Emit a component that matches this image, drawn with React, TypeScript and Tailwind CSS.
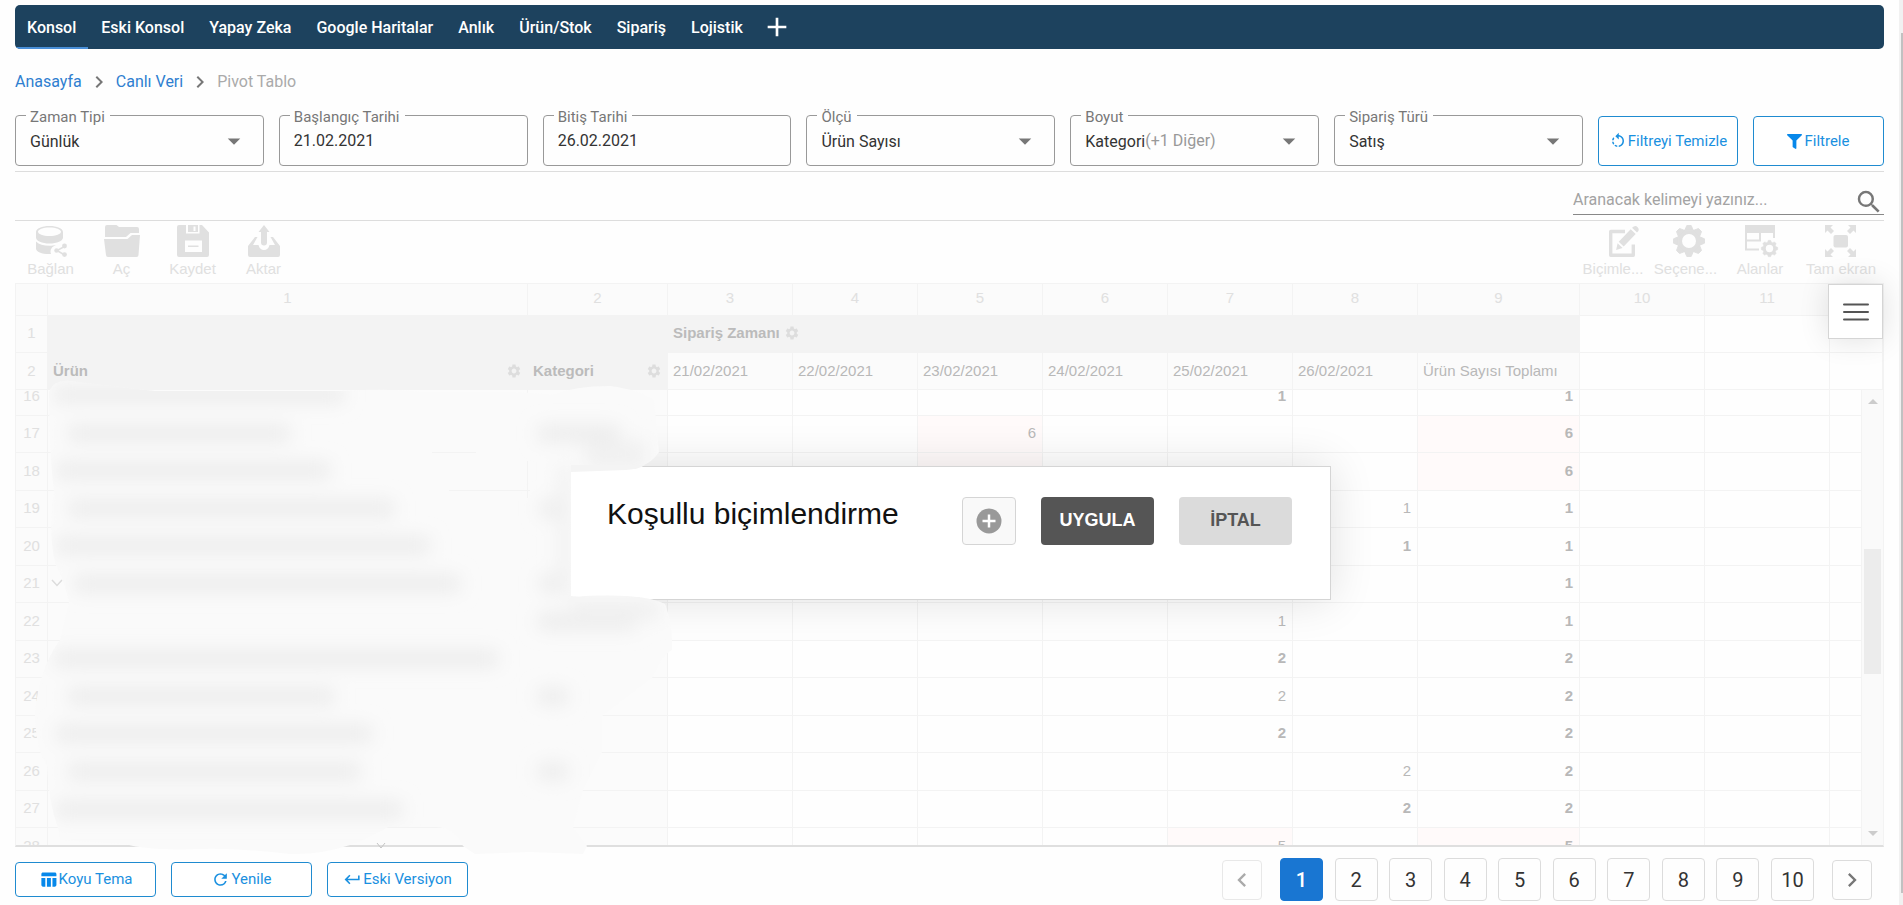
import React from "react";
import { FaFilter } from "react-icons/fa";
import {
  MdAdd,
  MdArrowDropDown,
  MdChevronLeft,
  MdChevronRight,
  MdKeyboardReturn,
  MdRefresh,
  MdRotateLeft,
  MdSearch,
  MdSettings,
  MdTableChart,
} from "react-icons/md";

const navItems = ["Konsol", "Eski Konsol", "Yapay Zeka", "Google Haritalar", "Anlık", "Ürün/Stok", "Sipariş", "Lojistik"];

const columnWidths = [
  "w-[32px]", "w-[480px]", "w-[140px]", "w-[125px]", "w-[125px]", "w-[125px]",
  "w-[125px]", "w-[125px]", "w-[125px]", "w-[162px]", "w-[125px]", "w-[125px]", "",
];

const dates = ["21/02/2021", "22/02/2021", "23/02/2021", "24/02/2021", "25/02/2021", "26/02/2021"];

type Row = { no: number; short?: boolean; col?: number; value?: string; bold?: boolean; total: string; hot?: boolean };

const rows: Row[] = [
  { no: 16, short: true, col: 7, value: "1", bold: true, total: "1" },
  { no: 17, short: true, col: 5, value: "6", total: "6", hot: true },
  { no: 18, col: 5, value: "6", bold: true, total: "6", hot: true },
  { no: 19, short: true, col: 8, value: "1", total: "1" },
  { no: 20, col: 8, value: "1", bold: true, total: "1" },
  { no: 21, short: true, total: "1" },
  { no: 22, col: 7, value: "1", total: "1" },
  { no: 23, short: true, col: 7, value: "2", bold: true, total: "2" },
  { no: 24, col: 7, value: "2", total: "2" },
  { no: 25, short: true, col: 7, value: "2", bold: true, total: "2" },
  { no: 26, col: 8, value: "2", total: "2" },
  { no: 27, short: true, col: 8, value: "2", bold: true, total: "2" },
  { no: 28, col: 7, value: "5", total: "5", hot: true },
];

/* x, y, width of each obscured label */
const obscured = [
  [54, 386, 290], [68, 425, 222], [56, 462, 274], [68, 500, 326], [56, 537, 374], [74, 575, 386],
  [54, 650, 444], [68, 688, 266], [56, 725, 316], [68, 763, 292], [56, 801, 346],
  [538, 425, 82], [540, 500, 28], [540, 575, 28], [538, 613, 98], [538, 688, 30], [538, 763, 30],
];

function Field({ id, label, children }: { id: string; label: string; children: React.ReactNode }) {
  return (
    <div className="relative h-[51px] flex-1 rounded border border-[#999]">
      <label htmlFor={id} className="absolute -top-[9px] left-[10px] bg-[#fefefe] pr-[5px] pl-1 text-[15px] leading-5 text-[#777]">
        {label}
      </label>
      {children}
    </div>
  );
}

function SelectField({ id, label, value, extra }: { id: string; label: string; value: string; extra?: string }) {
  return (
    <Field id={id} label={label}>
      <select id={id} className="h-full w-full appearance-none bg-transparent pt-[2px] pr-10 pl-[14px] text-base text-[#333] outline-none">
        <option>{value}</option>
      </select>
      {extra && (
        <span className="pointer-events-none absolute top-[13px] left-[74px] text-base leading-6 text-[#999]">{extra}</span>
      )}
      <MdArrowDropDown className="pointer-events-none absolute top-[10px] right-[14px] size-[30px] text-[#777]" />
    </Field>
  );
}

function DateField({ id, label, value }: { id: string; label: string; value: string }) {
  return (
    <Field id={id} label={label}>
      <input id={id} type="text" defaultValue={value} className="h-full w-full bg-transparent px-[14px] text-base text-[#333] outline-none" />
    </Field>
  );
}

function OutlineButton({ className, icon, children }: { className: string; icon: React.ReactNode; children: React.ReactNode }) {
  return (
    <button type="button" className={`flex items-center justify-center gap-px rounded border border-[#1f8bd0] bg-white text-[15px] text-[#1a90e0] ${className}`}>
      {icon}
      {children}
    </button>
  );
}

const teeth = [0, 45, 90, 135, 180, 225, 270, 315];

function Gear({ cx, cy, r }: { cx: number; cy: number; r: number }) {
  return (
    <g>
      <circle cx={cx} cy={cy} r={r * 0.61} fill="none" stroke="currentColor" strokeWidth={r * 0.32} />
      {teeth.map((a) => (
        <path
          key={a}
          d={`M${cx - r * 0.28} ${cy - r * 0.68}L${cx - r * 0.14} ${cy - r}h${r * 0.28}L${cx + r * 0.28} ${cy - r * 0.68}z`}
          fill="currentColor"
          stroke="currentColor"
          strokeLinejoin="round"
          strokeWidth={r * 0.06}
          transform={`rotate(${a} ${cx} ${cy})`}
        />
      ))}
    </g>
  );
}

const icons = {
  connect: (
    <svg viewBox="-3 0 36 32" className="h-8 w-9" fill="currentColor">
      <path fillRule="evenodd" d="M0 7C0 3.500 6 1 13.500 1S27 3.500 27 7v5.500c0 3.500-6 6-13.500 6S0 16 0 12.500zM2 6.700c0 2.300 5 4.300 11.500 4.300S25 9 25 6.700 20 2.400 13.500 2.400 2 4.400 2 6.700z" />
      <path d="M0 16.500c3 3 7.500 4.300 13.500 4.300 2.500 0 4.500-.3 6.500-.8-4 1.500-6.500 4.500-5 9C7 29.500 0 27 0 23.500z" />
      <path d="M28.500 21.500L21 25.500l7.500 4.500" fill="none" stroke="currentColor" strokeWidth="1.500" />
      <circle cx="28.500" cy="21" r="2.400" />
      <circle cx="20.500" cy="25.500" r="2.200" />
      <circle cx="28.500" cy="29.600" r="2.400" />
    </svg>
  ),
  open: (
    <svg viewBox="0 0 36 32" className="h-8 w-9" fill="currentColor">
      <path d="M1 12V2a2 2 0 0 1 2-2h9.500l2.500 2h18a2 2 0 0 1 2 2v4H26.500l-4.500 4z" />
      <path d="M0 14h23.500l4.500-4h8l-1.500 20a2 2 0 0 1-2 2H4a2 2 0 0 1-2-2z" />
    </svg>
  ),
  save: (
    <svg viewBox="0 0 32 32" className="size-8" fill="currentColor">
      <path fillRule="evenodd" d="M2 0h7v8.500h13.500V0H25l7 7.500V30a2 2 0 0 1-2 2H2a2 2 0 0 1-2-2V2a2 2 0 0 1 2-2zM8 15.500v11.500h17V15.500z" />
      <path fillRule="evenodd" d="M11 0h10v7H11zM16.500 1.500V6h2V1.500z" />
      <path d="M11 20.500h10.500V22H11z" />
    </svg>
  ),
  share: (
    <svg viewBox="0 0 32 32" className="size-8" fill="currentColor">
      <path d="M16 0l5.500 7H19v10.500a3 3 0 0 1-6 0V7h-2.500z" />
      <path d="M0 21L7 12h2.500L5 20h5.500c.8 3.200 2.800 5 5.500 5s4.700-1.800 5.500-5H27l-4.500-8H25l7 9v9a2 2 0 0 1-2 2H2a2 2 0 0 1-2-2z" />
    </svg>
  ),
  format: (
    <svg viewBox="-22 0 52 32" className="h-8 w-[52px]" fill="currentColor">
      <path d="M16 6.500H1.700V30.300h22.600V19.500" fill="none" stroke="currentColor" strokeLinejoin="round" strokeWidth="3.400" />
      <path d="M24.800 1.400a3.500 3.500 0 0 1 4.600 4.600l-1.400 1.500-5-4.700zM21.700 4.200l5 4.800-12 12.500-5-4.800zM8.600 18.300l5 4.600-6.500 2z" />
    </svg>
  ),
  options: (
    <svg viewBox="-7 0 39 32" className="h-8 w-[39px]">
      <Gear cx={16} cy={16} r={15.500} />
    </svg>
  ),
  fields: (
    <svg viewBox="-1 0 32 32" className="size-8 overflow-visible">
      <path d="M0 0h30v8H0z" fill="currentColor" />
      <path d="M1 8v16.500h13M1 15.500h14V8M29 8v5" fill="none" stroke="currentColor" strokeWidth="2" />
      <Gear cx={24.500} cy={23.500} r={8.200} />
    </svg>
  ),
  fullscreen: (
    <svg viewBox="0 0 32 32" className="size-8" fill="currentColor">
      <rect x="8.500" y="10" width="14.500" height="12.500" rx="2" />
      <path d="M0 0h8L5.500 2.500 9 6 6 9 2.500 5.500 0 8zM31 0v8l-2.500-2.500L25 9l-3-3 3.500-3.500L23 0zM0 32v-8l2.500 2.500L6 23l3 3-3.500 3.500L8 32zM31 32h-8l2.500-2.500L22 26l3-3 3.500 3.500L31 24z" />
    </svg>
  ),
};

function Tool({ className, icon, label }: { className: string; icon: React.ReactNode; label: string }) {
  return (
    <button type="button" className={`flex flex-col items-center pt-1 font-['Liberation_Sans',sans-serif] text-[15px] leading-6 text-[#e0e0e0] ${className}`}>
      {icon}
      {label}
    </button>
  );
}

function Columns() {
  return (
    <colgroup>
      {columnWidths.map((w, i) => (
        <col key={i} className={w} />
      ))}
    </colgroup>
  );
}

const edge = "border-r border-b border-[#f3f3f3]";
const line = "border-r border-b border-[#f3f3f3] pb-[2px]";

function GridHead() {
  return (
    <table className="w-full table-fixed border-separate border-spacing-0">
      <Columns />
      <tbody>
        <tr className="h-8 bg-[#fbfbfb] text-[#e0e0e0]">
          <td className={edge} />
          {["1", "2", "3", "4", "5", "6", "7", "8", "9", "10", "11", ""].map((n, i) => (
            <td key={i} className={`pb-1 text-center ${edge}`}>{n}</td>
          ))}
        </tr>
        <tr className="h-[37px]">
          <td className={`bg-[#fbfbfb] text-center text-[#e0e0e0] ${line}`}>1</td>
          <td colSpan={2} className={`bg-[#f3f3f3] ${line}`} />
          <th colSpan={7} className={`bg-[#f3f3f3] px-[5px] text-left text-[#bbb] ${line}`}>
            <span className="flex items-center gap-1">
              Sipariş Zamanı <MdSettings className="size-4 text-[#ddd]" />
            </span>
          </th>
          <td className={line} />
          <td className={line} />
          <td className={line} />
        </tr>
        <tr className="h-[37px] text-[#b8b8b8]">
          <td className={`bg-[#fbfbfb] text-center text-[#e0e0e0] ${edge}`}>2</td>
          <th className={`bg-[#f3f3f3] px-[5px] text-left text-[#bbb] ${edge}`}>
            <span className="flex items-center justify-between">
              Ürün <MdSettings className="size-4 text-[#ddd]" />
            </span>
          </th>
          <th className={`bg-[#f3f3f3] px-[5px] text-left text-[#bbb] ${edge}`}>
            <span className="flex items-center justify-between">
              Kategori <MdSettings className="size-4 text-[#ddd]" />
            </span>
          </th>
          {dates.map((d) => (
            <td key={d} className={`bg-[#fbfbfb] pl-[5px] ${edge}`}>{d}</td>
          ))}
          <td className={`bg-[#fbfbfb] pl-[5px] ${edge}`}>Ürün Sayısı Toplamı</td>
          <td className={edge} />
          <td className={edge} />
          <td className={edge} />
        </tr>
      </tbody>
    </table>
  );
}

function GridBody() {
  return (
    <table className="-mt-[11px] w-full table-fixed border-separate border-spacing-0">
      <Columns />
      <tbody className="text-right text-[#b8b8b8]">
        {rows.map((r) => (
          <tr key={r.no} className={r.short ? "h-[37px]" : "h-[38px]"}>
            <td className={`bg-[#fbfbfb] text-center text-[#e0e0e0] ${line}`}>{r.no}</td>
            <td className={`bg-[#fbfbfb] ${line}`}>
              {r.no === 21 && (
                <svg viewBox="0 0 12 8" className="ml-[3px] h-2 w-3">
                  <path d="M1 1l5 5.500L11 1" fill="none" stroke="#dcdcdc" strokeWidth="1.500" />
                </svg>
              )}
            </td>
            <td className={`bg-[#fbfbfb] ${line}`} />
            {[3, 4, 5, 6, 7, 8].map((c) => (
              <td
                key={c}
                className={`pr-[6px] ${line} ${r.bold ? "font-bold" : ""} ${r.hot && r.col === c ? "bg-[#fffafa]" : ""}`}
              >
                {r.col === c ? r.value : ""}
              </td>
            ))}
            <td className={`pr-[6px] font-bold ${line} ${r.hot ? "bg-[#fffafa]" : ""}`}>{r.total}</td>
            <td className={line} />
            <td className={line} />
            <td className={line} />
          </tr>
        ))}
      </tbody>
    </table>
  );
}

function Smudge() {
  return (
    <svg aria-hidden="true" viewBox="15 370 685 490" className="pointer-events-none absolute -left-px top-[86px] h-[490px] w-[685px]">
      <defs>
        <filter id="soft" x="-20%" y="-100%" width="140%" height="300%">
          <feGaussianBlur stdDeviation="9" />
        </filter>
        <clipPath id="patch">
          <path d="M49 392Q54 379 70 381Q110 386 155 391L340 391Q390 388 420 392L500 392Q530 392 553 395Q575 386 610 386Q640 390 654 400L659 452Q650 466 630 469L571 471V597Q640 592 665 604Q673 625 672 650Q662 655 653 677L602 716V752L583 790L573 827L587 846L583 854L530 852L475 854L463 846Q455 828 436 827L388 827Q370 838 350 845Q320 855 290 854Q240 848 200 849Q150 851 125 844L60 840L58 828Q48 800 47 765Q36 752 35 715Q38 670 60 640L69 602Q64 580 55 563Q48 530 54 492Q49 450 49 392z" />
        </clipPath>
      </defs>
      <g clipPath="url(#patch)">
        <path d="M15 370h685v490H15z" fill="#fafafa" />
        <path d="M432 452.500h44M449 490.500h81M527.500 461v37" stroke="#f3f3f3" fill="none" />
        <g filter="url(#soft)" fill="#ececec">
          {obscured.map(([x, y, w]) => (
            <rect key={`${x}-${y}`} x={x} y={y} width={w} height={17} />
          ))}
          <path d="M558 465h13v130h-13zM585 440h62v30h-62zM571 598h90v22h-90z" fill="#f1f1f1" />
        </g>
      </g>
      <path d="M571 472Q600 470 642 469L646 467H642V465H571zM571 471h14v124q-7 3-14 0z" fill="#fff" />
      <path d="M571 465H645Q640 469 626 470L571 472z" fill="#f4f4f4" />
      <path d="M571 596Q600 600 640 597V602H571z" fill="#f5f5f5" />
      <path d="M377 843l4 5 4-5" fill="none" stroke="#c4c4c4" />
    </svg>
  );
}

function FormatDialog() {
  return (
    <div className="pointer-events-none absolute inset-x-0 -top-[63px] bottom-0 flex items-center justify-center pl-[2px]">
      <div
        role="dialog"
        aria-label="Koşullu biçimlendirme"
        className="pointer-events-auto flex h-[134px] w-[761px] items-start justify-between border border-[#d5d5d5] bg-white pr-[38px] pl-9 pt-[30px] shadow-[0_0_45px_rgba(0,0,0,0.12)]"
      >
        <h2 className="text-[30px] leading-[34px] text-[#111]">Koşullu biçimlendirme</h2>
        <div className="flex gap-[25px]">
          <button type="button" aria-label="Ekle" className="flex h-12 w-[54px] items-center justify-center rounded border border-[#d5d5d5] bg-[#f9f9f9]">
            <svg viewBox="0 0 26 26" className="size-[26px]">
              <circle cx="13" cy="13" r="12.500" fill="#999" />
              <path d="M13 6.500v13M6.500 13h13" stroke="#fff" strokeWidth="2.500" />
            </svg>
          </button>
          <button type="button" className="h-12 w-[113px] rounded bg-[#555] pb-[2px] text-lg font-bold text-white">UYGULA</button>
          <button type="button" className="h-12 w-[113px] rounded bg-[#dbdbdb] pb-[2px] text-lg font-bold text-[#555]">İPTAL</button>
        </div>
      </div>
    </div>
  );
}

export default function App() {
  return (
    <div className="relative min-h-screen bg-[#fefefe] pt-[5px] pr-[19px] pl-[15px] font-[Roboto,sans-serif]">
      <nav className="flex h-11 gap-px overflow-hidden rounded-[5px] bg-[#1d425e]">
        {navItems.map((n, i) => (
          <a
            key={n}
            href="#"
            className={`flex items-center border-b-2 px-3 pt-[3px] text-base font-medium text-white ${i === 0 ? "border-[#4a90d9]" : "border-transparent"}`}
          >
            {n}
          </a>
        ))}
        <button type="button" aria-label="Yeni sekme" className="px-[5px] text-white">
          <MdAdd className="size-8" />
        </button>
      </nav>

      <div className="mb-[2px] flex h-16 items-center gap-[5px] pt-[2px] text-base text-[#aaa]">
        <a href="#" className="text-[#2f7fd0]">Anasayfa</a>
        <MdChevronRight className="size-6 text-[#777]" />
        <a href="#" className="text-[#2f7fd0]">Canlı Veri</a>
        <MdChevronRight className="size-6 text-[#777]" />
        <span>Pivot Tablo</span>
      </div>

      <form className="flex items-end gap-[15px] border-b border-[#ddd] pb-[5px]">
        <SelectField id="zaman-tipi" label="Zaman Tipi" value="Günlük" />
        <DateField id="baslangic" label="Başlangıç Tarihi" value="21.02.2021" />
        <DateField id="bitis" label="Bitiş Tarihi" value="26.02.2021" />
        <SelectField id="olcu" label="Ölçü" value="Ürün Sayısı" />
        <SelectField id="boyut" label="Boyut" value="Kategori" extra="(+1 Diğer)" />
        <SelectField id="siparis-turu" label="Sipariş Türü" value="Satış" />
        <OutlineButton className="h-[50px] w-[140px]" icon={<MdRotateLeft className="size-[18px]" />}>Filtreyi Temizle</OutlineButton>
        <OutlineButton className="h-[50px] w-[131px]" icon={<FaFilter className="mr-px size-[15px] text-[#0788ea]" />}>Filtrele</OutlineButton>
      </form>

      <div className="flex h-[49px] justify-end border-b border-[#ddd]">
        <div className="flex h-[43px] w-[311px] items-center border-b border-[#888]">
          <input
            type="search"
            aria-label="Arama"
            placeholder="Aranacak kelimeyi yazınız..."
            className="h-full min-w-0 flex-1 bg-transparent pt-3 text-base outline-none placeholder:text-[#a3a3a3]"
          />
          <button type="button" aria-label="Ara" className="pt-[17px] text-[#777]">
            <MdSearch className="size-[30px]" />
          </button>
        </div>
      </div>

      <div className="flex h-[62px] justify-between">
        <div className="flex">
          <Tool className="w-[71px]" icon={icons.connect} label="Bağlan" />
          <Tool className="w-[71px]" icon={icons.open} label="Aç" />
          <Tool className="w-[71px]" icon={icons.save} label="Kaydet" />
          <Tool className="w-[71px]" icon={icons.share} label="Aktar" />
        </div>
        <div className="flex">
          <Tool className="w-[72px]" icon={icons.format} label="Biçimle..." />
          <Tool className="w-[73px]" icon={icons.options} label="Seçene..." />
          <Tool className="w-[76px]" icon={icons.fields} label="Alanlar" />
          <Tool className="w-[86px]" icon={icons.fullscreen} label="Tam ekran" />
        </div>
      </div>

      <section className="relative border-t border-r border-b-2 border-l border-[#f3f3f3] border-b-[#dfdfdf] font-['Liberation_Sans',sans-serif] text-[15px] leading-5">
        <GridHead />
        <div className="flex h-[455px] overflow-hidden">
          <div className="min-w-0 flex-1">
            <GridBody />
          </div>
          <div className="flex w-[21px] flex-col items-center bg-[#fafafa]">
            <MdArrowDropDown className="size-6 rotate-180 text-[#ccc]" />
            <div className="mt-[135px] h-[125px] w-[17px] bg-[#ececec]" />
            <MdArrowDropDown className="mt-auto size-6 text-[#ccc]" />
          </div>
        </div>
        <FormatDialog />
        <Smudge />
        <button
          type="button"
          aria-label="Menü"
          className="absolute top-0 right-0 flex size-[55px] items-center justify-center border border-[#d5d5d5] bg-white shadow-[0_0_30px_rgba(0,0,0,0.12)]"
        >
          <svg viewBox="0 0 26 18" className="h-[18px] w-[26px]">
            <path d="M1 1.500h24M1 9h24M1 16.500h24" stroke="#555" strokeWidth="2" strokeLinecap="round" />
          </svg>
        </button>
      </section>

      <footer className="flex items-center justify-between pt-[11px] pr-3">
        <div className="flex gap-[15px]">
          <OutlineButton className="h-[35px] w-[141px]" icon={<MdTableChart className="size-[19px] text-[#0788ea]" />}>Koyu Tema</OutlineButton>
          <OutlineButton className="h-[35px] w-[141px]" icon={<MdRefresh className="size-[19px]" />}>Yenile</OutlineButton>
          <OutlineButton className="h-[35px] w-[141px]" icon={<MdKeyboardReturn className="size-[19px]" />}>Eski Versiyon</OutlineButton>
        </div>
        <div className="flex items-center gap-[18px] text-xl text-[#333]">
          <button type="button" aria-label="Önceki" className="flex size-10 items-center justify-center rounded border border-[#e8e8e8] text-[#aaa]">
            <MdChevronLeft className="size-7" />
          </button>
          <div className="flex w-[534px] justify-between">
            {[1, 2, 3, 4, 5, 6, 7, 8, 9, 10].map((n) => (
              <button
                key={n}
                type="button"
                className={`h-[43px] w-[43px] rounded border ${n === 1 ? "border-[#1976d2] bg-[#1976d2] font-medium text-white" : "border-[#dcdcdc]"}`}
              >
                {n}
              </button>
            ))}
          </div>
          <button type="button" aria-label="Sonraki" className="flex size-10 items-center justify-center rounded border border-[#dcdcdc] text-[#777]">
            <MdChevronRight className="size-7" />
          </button>
        </div>
      </footer>

      <div className="absolute inset-y-0 right-0 w-1 bg-[#f1f1f1] pt-[33px] pb-3 pl-[2px]">
        <div className="h-full bg-[#c1c1c1]" />
      </div>
    </div>
  );
}
